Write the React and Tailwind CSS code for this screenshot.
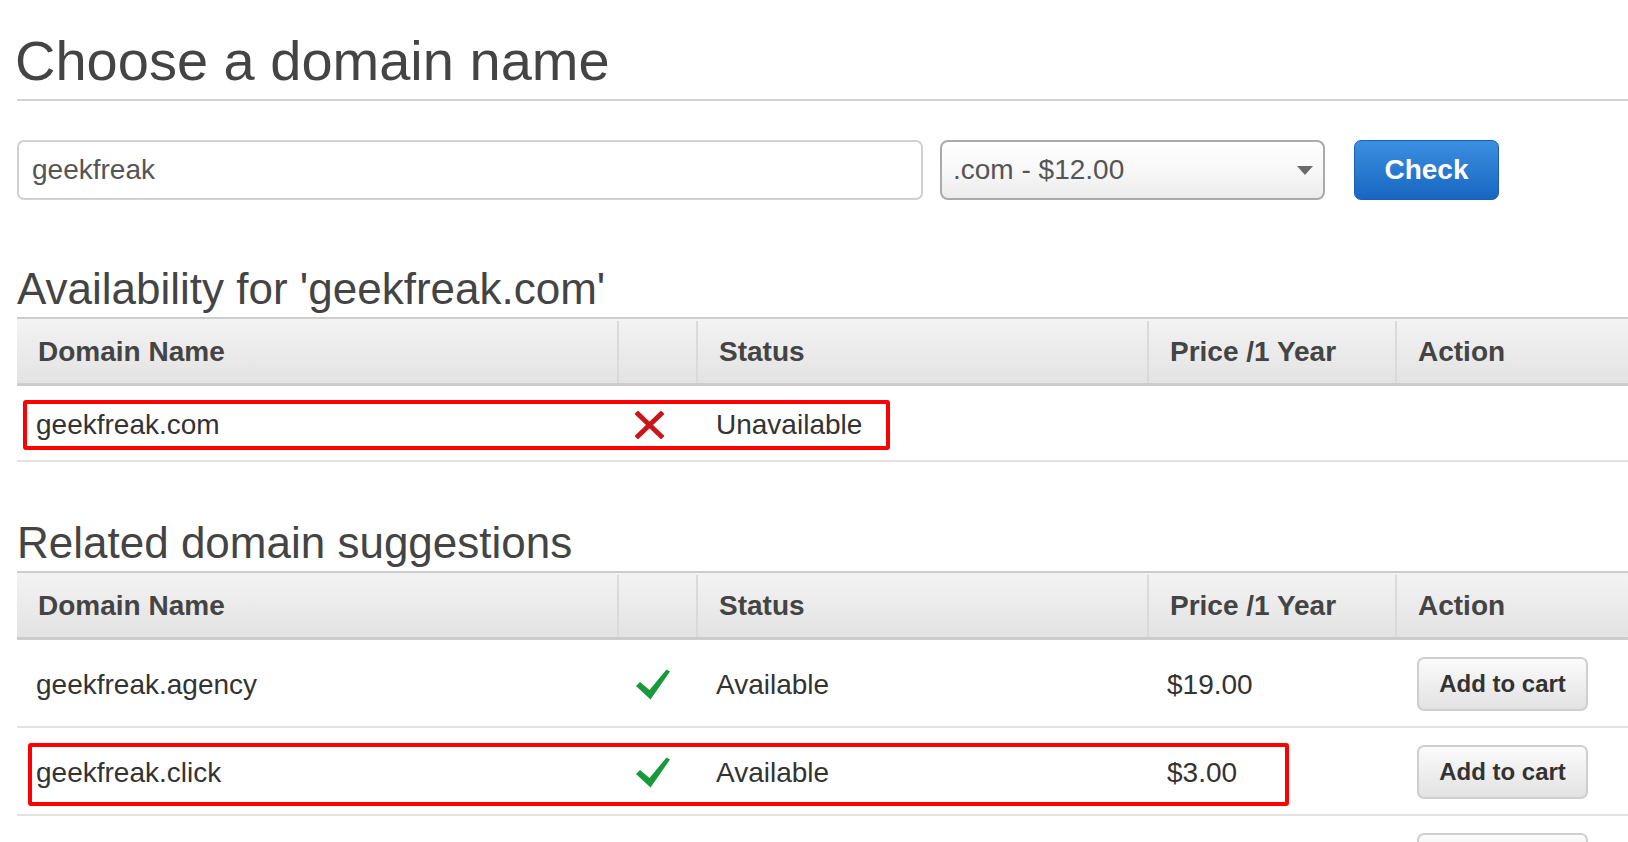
const font = { fontFamily: '"Liberation Sans", Arial, Helvetica, sans-serif' }

const cols = 'grid grid-cols-[600px_79px_451px_248px_1fr]'

function CrossIcon() {
  return (
    <svg width="29" height="28" viewBox="0 0 29 28">
      <path d="M3 3 L26 25 M26 3 L3 25" stroke="#c9161b" strokeWidth="5" strokeLinecap="square" fill="none" />
    </svg>
  )
}

function CheckIcon() {
  return (
    <svg width="36" height="31" viewBox="0 0 36 31">
      <path d="M1 17 L5 13 L14.5 21 L31.5 0.5 L35 2.5 L15.5 30.5 Z" fill="#169a3b" />
    </svg>
  )
}

function HeaderRow() {
  return (
    <div className={`${cols} h-[69px] border-t-2 border-b-[3px] border-[#cccccc] bg-linear-to-b from-[#f3f3f3] to-[#e3e3e3] pt-[2px] text-[28px] font-bold text-[#444]`}>
      <div className="flex items-center px-[21px]">Domain Name</div>
      <div className="border-l-2 border-[#dadada]" />
      <div className="flex items-center px-[21px] border-l-2 border-[#dadada]">Status</div>
      <div className="flex items-center px-[21px] border-l-2 border-[#dadada]">Price /1 Year</div>
      <div className="flex items-center px-[21px] border-l-2 border-[#dadada]">Action</div>
    </div>
  )
}

function AddButton({ label = 'Add to cart' }) {
  return (
    <button className="h-[54px] w-[171px] rounded-[7px] border-2 border-[#cfcfcf] bg-linear-to-b from-[#fbfbfb] to-[#e2e2e2] text-[24px] font-bold text-[#333]">
      {label}
    </button>
  )
}

function SuggestionRow({ name, price, marked }) {
  return (
    <div className={`${cols} relative h-[88px] border-b-2 border-[#e2e2e2] pt-[3px] text-[28px] text-[#333]`}>
      <div className="flex items-center px-[19px]">{name}</div>
      <div className="flex items-center pl-[18px]">
        <CheckIcon />
      </div>
      <div className="flex items-center px-[20px]">Available</div>
      <div className="flex items-center px-[20px]">{price}</div>
      <div className="flex items-start pt-[14px] px-[22px]">
        <AddButton />
      </div>
      {marked && (
        <div className="absolute left-[11px] top-[15px] h-[63px] w-[1261px] rounded-[3px] border-4 border-[#ff0000]" />
      )}
    </div>
  )
}

export default function App() {
  return (
    <div className="h-screen overflow-hidden bg-white pl-[17px]" style={font}>
      <h1 className="-ml-[2px] mt-[33px] text-[56px] leading-[56px] font-normal text-[#444]">Choose a domain name</h1>
      <div className="mt-[10px] h-[2px] bg-[#d2d2d2]" />

      {/* Search form */}
      <div className="mt-[39px] flex h-[60px] items-stretch">
        <div className="flex w-[906px] items-center rounded-[7px] border-2 border-[#d0d0d0] px-[13px] text-[28px] text-[#555]">
          geekfreak
        </div>
        <div className="ml-[17px] flex w-[385px] items-center justify-between rounded-[8px] border-2 border-[#aaaaaa] bg-linear-to-b from-[#ffffff] via-[#f8f8f8] via-50% to-[#ececec] pl-[11px] pr-[10px] text-[28px] text-[#555]">
          <span>.com - $12.00</span>
          <svg width="16" height="9" viewBox="0 0 16 9">
            <path d="M0 0 L16 0 L8 9 Z" fill="#6b6b6b" />
          </svg>
        </div>
        <button className="ml-[29px] w-[145px] rounded-[7px] border border-[#1b5fae] bg-linear-to-b from-[#3b8fe0] to-[#1766c2] text-[28px] font-bold text-white">
          Check
        </button>
      </div>

      {/* Availability */}
      <h2 className="mt-[67px] text-[44px] leading-[44px] font-normal text-[#444]">Availability for 'geekfreak.com'</h2>
      <div className="mt-[6px]">
        <HeaderRow />
        <div className={`${cols} relative h-[76px] border-b-2 border-[#e2e2e2] pt-[3px] text-[28px] text-[#333]`}>
          <div className="flex items-center px-[19px]">geekfreak.com</div>
          <div className="flex items-center pl-[18px]">
            <CrossIcon />
          </div>
          <div className="flex items-center px-[20px]">Unavailable</div>
          <div />
          <div />
          <div className="absolute left-[6px] top-[14px] h-[50px] w-[867px] rounded-[3px] border-4 border-[#ff0000]" />
        </div>
      </div>

      {/* Suggestions */}
      <h2 className="mt-[59px] text-[44px] leading-[44px] font-normal text-[#444]">Related domain suggestions</h2>
      <div className="mt-[6px]">
        <HeaderRow />
        <SuggestionRow name="geekfreak.agency" price="$19.00" />
        <SuggestionRow name="geekfreak.click" price="$3.00" marked />
        {/* next row, only the top of its button shows */}
        <div className={`${cols} h-[88px]`}>
          <div />
          <div />
          <div />
          <div />
          <div className="pt-[17px] px-[22px]">
            <AddButton label="" />
          </div>
        </div>
      </div>
    </div>
  )
}
